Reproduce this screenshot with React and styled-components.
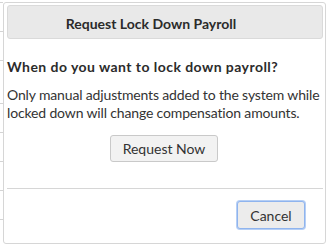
import React from "react";
import styled, { createGlobalStyle } from "styled-components";

const GlobalStyle = createGlobalStyle`
  html, body {
    margin: 0;
    padding: 0;
  }
  body {
    width: 328px;
    height: 246px;
    overflow: hidden;
    font-family: Lato, "Open Sans", sans-serif;
    background-color: #fff;
    background-image: repeating-linear-gradient(
      to bottom,
      transparent 0px,
      transparent 28px,
      #d4d4d4 28px,
      #d4d4d4 29px
    );
    background-position: 0 75px;
    background-size: 3px 100%;
    background-repeat: repeat-y;
  }
`;

const Page = styled.div`
  padding: 2px 2px 2px 3px;
`;

const Dialog = styled.div`
  width: 321px;
  height: 240px;
  box-sizing: content-box;
  background: #fff;
  border: 1px solid #d6d6d6;
  border-radius: 3px;
  display: flex;
  flex-direction: column;
  color: #333;
`;

const Header = styled.div`
  margin: 2px 2px 0 3px;
  height: 30px;
  background: #e9e9e9;
  border: 1px solid #dadada;
  border-radius: 3px;
  display: flex;
  align-items: center;
  justify-content: center;
  padding: 2px 28px 0 0;
`;

const Title = styled.div`
  font-size: 14px;
  font-weight: 700;
  color: #2b2b2b;
`;

const Body = styled.div`
  padding: 18px 4px 0 3px;
  display: flex;
  flex-direction: column;
`;

const Question = styled.div`
  font-size: 14px;
  font-weight: 700;
  letter-spacing: 0.45px;
  color: #2b2b2b;
  line-height: 19px;
`;

const Note = styled.p`
  margin: 10px 0 0;
  font-size: 14px;
  letter-spacing: -0.15px;
  line-height: 18px;
  color: #333;
`;

const Center = styled.div`
  display: flex;
  justify-content: center;
  margin-top: 13px;
`;

const Button = styled.button`
  font-family: inherit;
  font-size: 14px;
  color: #333;
  background: ${({ $focused }) => ($focused ? "#ececec" : "#f2f2f2")};
  border: 1px solid ${({ $focused }) => ($focused ? "#8fb4ee" : "#c9c9c9")};
  box-shadow: ${({ $focused }) => ($focused ? "0 0 0 1px #b6cff5" : "none")};
  border-radius: 3px;
  height: ${({ $height }) => $height || "27px"};
  min-width: ${({ $width }) => $width || "auto"};
  padding: 0 12px;
  cursor: pointer;
`;

const Divider = styled.hr`
  margin: 26px 2px 0 3px;
  border: 0;
  border-top: 1px solid #d6d6d6;
`;

const Footer = styled.div`
  display: flex;
  justify-content: flex-end;
  padding: 12px 20px 0 0;
`;

export default function App() {
  return (
    <>
      <GlobalStyle />
      <Page>
        <Dialog>
          <Header>
            <Title>Request Lock Down Payroll</Title>
          </Header>
          <Body>
            <Question>When do you want to lock down payroll?</Question>
            <Note>
              Only manual adjustments added to the system while locked down
              will change compensation amounts.
            </Note>
            <Center>
              <Button $width="105px">Request Now</Button>
            </Center>
          </Body>
          <Divider />
          <Footer>
            <Button $focused $width="68px" $height="28px">
              Cancel
            </Button>
          </Footer>
        </Dialog>
      </Page>
    </>
  );
}
